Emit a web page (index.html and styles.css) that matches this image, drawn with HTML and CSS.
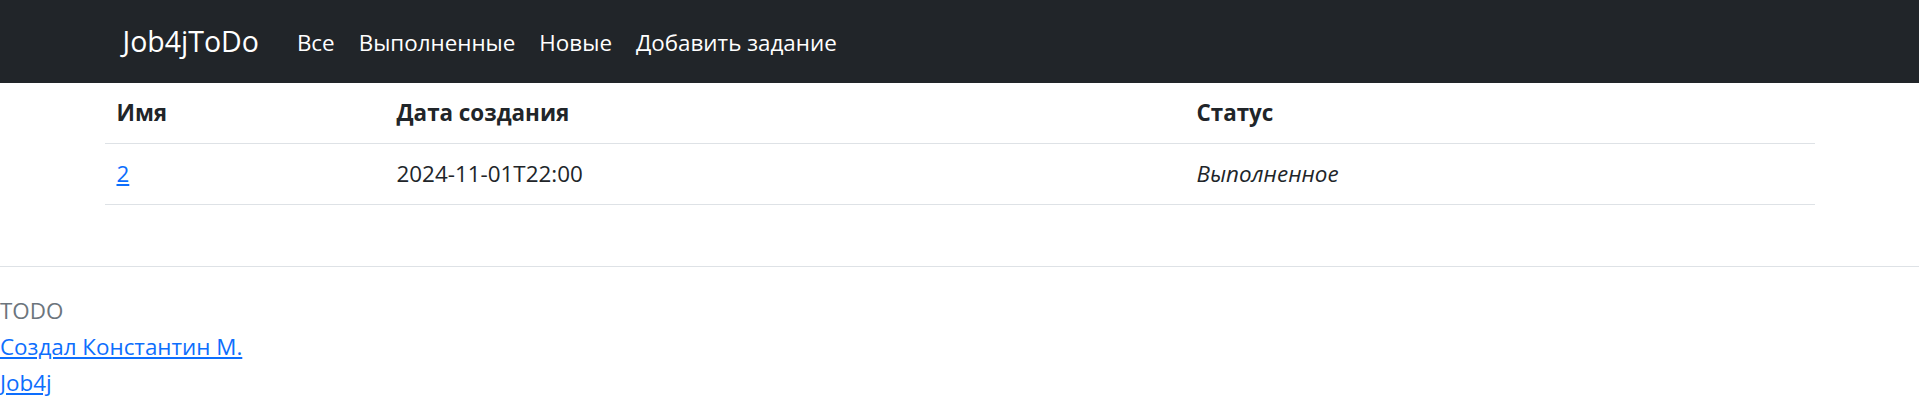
FILE: index.html
```html
<!DOCTYPE html>
<html lang="ru">
<head>
<meta charset="utf-8">
<title>Job4jToDo</title>
<link rel="stylesheet" href="styles.css">
</head>
<body>
<nav class="navbar">
  <div class="nav-inner">
    <a class="brand" href="#">Job4jToDo</a>
    <ul class="nav-links">
      <li><a href="#">Все</a></li>
      <li><a href="#">Выполненные</a></li>
      <li><a href="#">Новые</a></li>
      <li><a href="#">Добавить задание</a></li>
    </ul>
  </div>
</nav>
<main class="content">
  <table class="tasks">
    <thead>
      <tr>
        <th class="col-name">Имя</th>
        <th class="col-date">Дата создания</th>
        <th class="col-status">Статус</th>
      </tr>
    </thead>
    <tbody>
      <tr>
        <td><a href="#">2</a></td>
        <td>2024-11-01T22:00</td>
        <td><i>Выполненное</i></td>
      </tr>
    </tbody>
  </table>
</main>
<footer class="footer">
  <hr class="divider">
  <div class="footer-lines">
    <span class="muted">TODO</span>
    <a href="#">Создал Константин М.</a>
    <a href="#">Job4j</a>
  </div>
</footer>
</body>
</html>
```
FILE: styles.css
```css
* { box-sizing: border-box; }
html, body { margin: 0; padding: 0; }
body {
  font-family: "Open Sans", "Noto Sans", sans-serif;
  font-size: 22.4px;
  line-height: 36px;
  color: #212529;
  background: #fff;
}
a { color: #0d6efd; text-decoration: underline; }
.navbar {
  background: #212529;
  height: 83px;
  display: flex;
  align-items: center;
}
.nav-inner {
  width: 1710px;
  margin: 0 auto;
  padding: 0 18px;
  display: flex;
  align-items: center;
}
.brand {
  color: #fff;
  text-decoration: none;
  font-size: 28.5px;
  margin-right: 26px;
  line-height: 45px;
}
.nav-links {
  list-style: none;
  margin: 0;
  padding: 0;
  display: flex;
}
.nav-links a {
  color: #fff;
  text-decoration: none;
  display: block;
  padding: 13px 12px 11px;
}
.content {
  width: 1710px;
  margin: 0 auto;
}
.tasks {
  width: 100%;
  border-collapse: collapse;
  margin-bottom: 24px;
}
.tasks th, .tasks td {
  text-align: left;
  padding: 12px;
  border-bottom: 1px solid #dee2e6;
  vertical-align: bottom;
}
.tasks th { font-weight: 700; }
.col-name { width: 280px; }
.col-date { width: 800px; }
.footer { padding: 0; }
.divider {
  margin: 61px 0 26px;
  border: 0;
  border-top: 1px solid #dee2e6;
}
.footer-lines {
  display: flex;
  flex-direction: column;
  align-items: flex-start;
  line-height: 36px;
}
.muted { color: #6c757d; }
```
